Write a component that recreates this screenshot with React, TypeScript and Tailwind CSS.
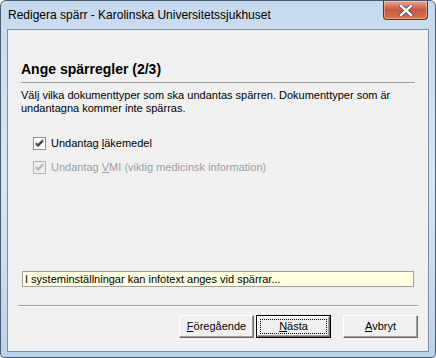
import React from 'react';

const ui = { fontFamily: "'Liberation Sans', Arial, sans-serif" };

function Check({ disabled }: { disabled?: boolean }) {
  return (
    <span
      className={`flex h-[13px] w-[13px] items-center justify-center border ${
        disabled ? 'border-[#b4b4b4] bg-[#f0f0f0]' : 'border-[#8e8f8f] bg-white'
      }`}
    >
      <svg width="9" height="9" viewBox="0 0 9 9">
        <path
          d="M1 3.5 L3 5.5 L8 0.5 M1 4.5 L3 6.5 L8 1.5 M1 5.5 L3 7.5 L8 2.5"
          fill="none"
          stroke={disabled ? '#a0a0a0' : '#000'}
          strokeWidth="1"
        />
      </svg>
    </span>
  );
}

function Btn({
  children,
  primary,
}: {
  children: React.ReactNode;
  primary?: boolean;
}) {
  return (
    <button
      className={`h-[23px] w-[75px] bg-[#f0f0f0] p-0 text-[11px] text-black ${
        primary ? 'border border-black' : ''
      }`}
      style={ui}
    >
      <span className="flex h-full w-full border-t border-l border-white border-r border-b border-r-[#696969] border-b-[#696969] shadow-[inset_-1px_-1px_0_#a0a0a0]">
        <span
          className={`m-[3px] flex flex-1 items-center justify-center ${
            primary ? 'outline outline-1 outline-dotted outline-black' : ''
          }`}
        >
          {children}
        </span>
      </span>
    </button>
  );
}

export default function App() {
  return (
    <div className="h-[358px] w-[436px] bg-white">
      <div className="flex h-[358px] w-[436px] flex-col rounded-t-[6px] rounded-b-[4px] border border-[#4a5b70] bg-gradient-to-b from-[#c6d9ee] via-[#d9e7f5] to-[#bcd3eb] px-[6px] pb-[5px]">
        {/* Title bar */}
        <div className="flex h-[28px] shrink-0 items-start">
          <span className="mt-[7px] ml-[1px] text-[12px] leading-[15px] text-black" style={ui}>
            Redigera spärr - Karolinska Universitetssjukhuset
          </span>
          <div className="ml-auto mr-[1px] flex h-[19px] w-[45px] items-center justify-center rounded-b-[4px] border border-t-0 border-[#6b2a1e] bg-gradient-to-b from-[#e8a493] via-[#c8573c] to-[#d3774f] shadow-[inset_0_0_0_1px_rgba(255,255,255,0.35)]">
            <svg width="14" height="11" viewBox="0 0 14 11">
              <path
                d="M2 1 L12 10 M12 1 L2 10"
                stroke="#3d4a5a"
                strokeWidth="4"
                strokeLinecap="square"
              />
              <path
                d="M2 1 L12 10 M12 1 L2 10"
                stroke="#fff"
                strokeWidth="2.4"
                strokeLinecap="square"
              />
            </svg>
          </div>
        </div>

        {/* Client area */}
        <div
          className="flex flex-1 flex-col border border-[#7f8fa3] bg-[#f0f0f0] text-[11px] leading-[13px] text-black"
          style={ui}
        >
          <div className="px-[13px] pt-[31px]">
            <div className="text-[14px] font-bold leading-[16px]">Ange spärregler (2/3)</div>
            <div className="mt-[5px] h-px bg-[#a0a0a0]" />
            <p className="mt-[6px]">
              Välj vilka dokumenttyper som ska undantas spärren. Dokumenttyper som är
              <br />
              undantagna kommer inte spärras.
            </p>
          </div>

          <div className="mt-[22px] flex flex-col gap-[11px] pl-[25px]">
            <label className="flex items-center gap-[5px]">
              <Check />
              <span>
                Undantag <span className="underline">l</span>äkemedel
              </span>
            </label>
            <label className="flex items-center gap-[5px] text-[#a0a0a0]">
              <Check disabled />
              <span>
                Undantag <span className="underline">V</span>MI (viktig medicinsk information)
              </span>
            </label>
          </div>

          <div className="flex-1" />

          <div className="mx-[14px] flex h-[16px] items-center border border-[#a0a0a0] bg-[#ffffe1] px-[2px]">
            I systeminställningar kan infotext anges vid spärrar...
          </div>

          <div className="mx-[10px] mt-[18px] h-px bg-[#a0a0a0] shadow-[0_1px_0_#fff]" />

          <div className="flex justify-end gap-[2px] pr-[10px] pt-[9px] pb-[13px]">
            <Btn>
              <span>
                <span className="underline">F</span>öregående
              </span>
            </Btn>
            <Btn primary>
              <span>
                <span className="underline">N</span>ästa
              </span>
            </Btn>
            <span className="w-[8px]" />
            <Btn>
              <span>
                <span className="underline">A</span>vbryt
              </span>
            </Btn>
          </div>
        </div>
      </div>
    </div>
  );
}
